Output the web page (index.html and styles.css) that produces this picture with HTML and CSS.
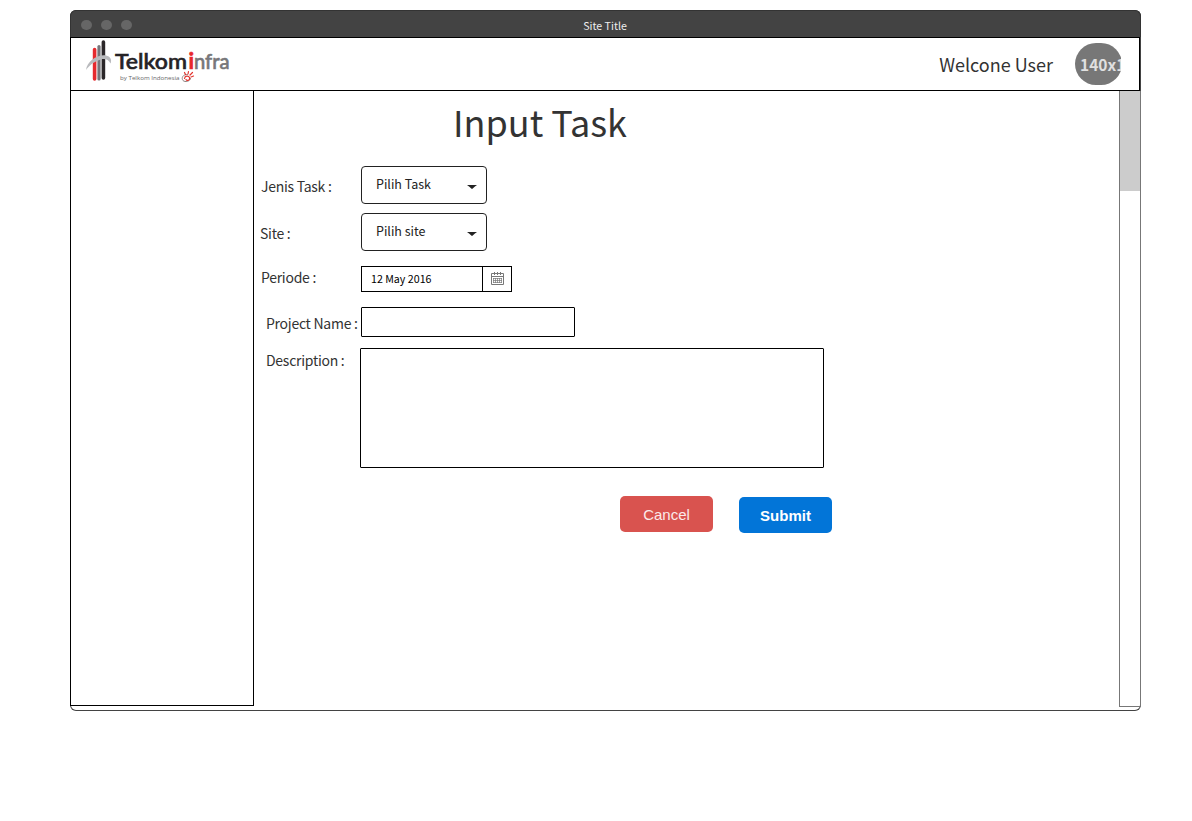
FILE: index.html
```html
<!DOCTYPE html>
<html lang="id">
<head>
<meta charset="utf-8">
<title>Site Title</title>
<link rel="stylesheet" href="styles.css">
</head>
<body>
<div class="window">
  <div class="titlebar">
    <div class="dots"><i class="dot"></i><i class="dot"></i><i class="dot"></i></div>
    <span class="site-title">Site Title</span>
  </div>
  <header class="header">
    <svg class="logo" width="156" height="50" viewBox="80 38 156 50" role="img" aria-label="Telkominfra">
      <g fill="none" stroke-linecap="round">
        <path d="M94.600 49.500V79" stroke="#e62a2e" stroke-width="3.600"/>
        <path d="M99 46.500V79" stroke="#75757a" stroke-width="3.200"/>
        <path d="M103.400 42V78" stroke="#2b2729" stroke-width="3.600"/>
      </g>
      <path d="M86 70C87 61 98 54 106 55.500C110.500 56.200 112 60 110.500 63.500C108 58 103 58 98 60.500C92 63 89 66 86 70Z" fill="#b9babd"/>
      <text class="logo-name" x="115" y="69" textLength="72" lengthAdjust="spacingAndGlyphs" fill="#252225" stroke="#252225">Telkom</text>
      <text class="logo-name logo-i" x="188.500" y="69" fill="#e8262b" stroke="#e8262b">i</text>
      <text class="logo-name" x="194" y="69" textLength="35.500" lengthAdjust="spacingAndGlyphs" fill="#77777a" stroke="#77777a">nfra</text>
      <text class="logo-by" x="120" y="80" textLength="59.500" lengthAdjust="spacingAndGlyphs" fill="#66666a">by Telkom Indonesia</text>
      <g fill="none" stroke-linecap="round">
        <path d="M187.500 74.500C183 74 181 78 183 80.500C185 82.500 190 81.500 190.500 78.500" stroke="#8e8280" stroke-width="1"/>
        <path d="M184.500 78.500C185 75.500 188.500 75.500 189.500 77.500C190.500 80 187 81.500 186 79.500M185.500 74.500L184.500 72.500M188 74L188.500 71.500M190 75L192.500 72.500M191 77L193.500 76" stroke="#e3352f" stroke-width="1.200"/>
      </g>
    </svg>
    <span class="welcome">Welcone User</span>
    <div class="avatar"><svg width="46" height="42" viewBox="0 0 46 42"><rect width="47" height="42" rx="21" fill="#777"/><text class="avatar-text" x="5" y="28">140x1</text></svg></div>
  </header>
  <div class="body">
    <aside class="sidebar"></aside>
    <main class="main">
      <h1 class="heading">Input Task</h1>
      <div class="row row-task">
        <label class="label">Jenis Task :</label>
        <div class="select"><span>Pilih Task</span><svg class="caret" width="10" height="5" viewBox="0 0 10 5"><path d="M0 0H10Q8 1 5.700 3.600Q5 4.200 4.300 3.600Q2 1 0 0Z" fill="#222"/></svg></div>
      </div>
      <div class="row row-site">
        <label class="label">Site :</label>
        <div class="select"><span>Pilih site</span><svg class="caret" width="10" height="5" viewBox="0 0 10 5"><path d="M0 0H10Q8 1 5.700 3.600Q5 4.200 4.300 3.600Q2 1 0 0Z" fill="#222"/></svg></div>
      </div>
      <div class="row row-period">
        <label class="label">Periode :</label>
        <div class="date">
          <span class="date-value">12 May 2016</span>
          <span class="date-button"><svg width="13" height="13" viewBox="0 0 13 13" fill="none" stroke="#777" stroke-width="1"><path d="M.5 1.500H12.500V12.500H.5ZM.5 4.500H12.500"/><path d="M3.500 0V3M6.500 0V3M9.500 0V3"/><path d="M2 6.500H11M2 8.500H11M2 10.500H11M2.500 6V11M4.500 6V11M6.500 6V11M8.500 6V11M10.500 6V11" stroke-width=".7"/></svg></span>
        </div>
      </div>
      <div class="row row-project">
        <label class="label">Project Name :</label>
        <div class="input"></div>
      </div>
      <div class="row row-description">
        <label class="label">Description :</label>
        <div class="textarea"></div>
      </div>
      <div class="actions">
        <button class="button cancel">Cancel</button>
        <button class="button submit">Submit</button>
      </div>
    </main>
    <div class="scrollbar"><div class="thumb"></div></div>
  </div>
</div>
</body>
</html>
```

FILE: styles.css
```css
* { box-sizing: border-box; }
body {
  margin: 0;
  padding: 10px 0 0 70px;
  background: #fff;
  color: #333;
  font-family: "Noto Sans CJK SC", "Noto Sans", sans-serif;
}
.window {
  width: 1071px;
  height: 701px;
  border-radius: 6px;
  box-shadow: inset 0 0 0 1px #434343;
}
.titlebar {
  display: grid;
  grid-template-columns: 1fr auto 1fr;
  align-items: center;
  height: 27px;
  padding-top: 2px;
  background: #434343;
  border: 1px solid #333;
  border-bottom: 0;
  border-radius: 6px 6px 0 0;
}
.dots { display: flex; gap: 10px; padding-left: 10px; }
.dot { width: 10.5px; height: 10px; margin-right: -.5px; border-radius: 50%; background: #666; }
.site-title { padding-top: 1px; margin-left: -1px; color: #eee; font-size: 10.67px; line-height: 16px; }
.header {
  display: flex;
  width: 1070px;
  height: 54px;
  padding-left: 9px;
  border: 1px solid #000;
  background: #fff;
}
.logo { flex: none; }
.logo-name { font: 500 22px Lato, sans-serif; stroke-width: .6px; }
.logo-i { font-weight: 700; }
.logo-by { font: 5.8px "Open Sans", sans-serif; }
.welcome {
  margin-left: auto;
  padding-top: 11px;
  font-size: 18px;
  line-height: 30px;
  white-space: nowrap;
}
.avatar { width: 46px; height: 42px; margin: 5px 18px 0 22px; }
.avatar svg { display: block; }
.avatar-text { font-size: 15.5px; font-weight: 700; fill: #e0e0e0; }
.body { display: flex; height: 616px; }
.sidebar {
  width: 184px;
  height: 615px;
  border: 1px solid #000;
  border-top: 0;
}
.main { flex: 1; }
.scrollbar { width: 22px; border: 1px solid #777; border-top: 0; }
.thumb { height: 100px; background: #ccc; }
.heading {
  margin: 0 0 0 199px;
  padding-top: 2px;
  height: 75px;
  font-size: 36px;
  font-weight: 400;
  line-height: 56px;
}
.row { display: flex; }
.label { width: 107px; padding-left: 7px; font-size: 14px; letter-spacing: -.27px; line-height: 20px; white-space: nowrap; }
.row-task .label { padding-top: 10px; }
.row-site { margin-top: 9px; }
.row-site .label { padding: 10px 0 0 6px; }
.row-period { margin-top: 15px; }
.row-period .label { padding-top: 1px; }
.row-project { margin-top: 15px; }
.row-project .label { padding: 6px 0 0 12px; }
.row-description { margin-top: 11px; }
.row-description .label { width: 106px; padding: 2px 0 0 12px; }
.select {
  display: flex;
  justify-content: space-between;
  width: 126px;
  height: 38px;
  padding: 7px 9px 0 14px;
  border: 1px solid #222;
  border-radius: 4px;
  color: #222;
  font-size: 12.5px;
  line-height: 20px;
}
.caret { margin-top: 11px; }
.date {
  display: flex;
  width: 151px;
  height: 26px;
  border: 1px solid #000;
  color: #000;
  font-size: 10.67px;
  line-height: 24px;
}
.date-value { width: 120px; padding-left: 9px; }
.date-button { flex: 1; padding: 5px 0 0 8px; border-left: 1px solid #000; }
.date-button svg { display: block; }
.input { width: 214px; height: 30px; border: 1px solid #000; border-radius: 1px; }
.textarea { width: 464px; height: 120px; border: 1px solid #000; border-radius: 1px; }
.actions { display: flex; gap: 26px; padding: 28px 0 0 366px; }
.button {
  width: 93px;
  height: 36px;
  padding: 0;
  border: 0;
  border-radius: 5px;
  color: #fff;
  font: 15px "Liberation Sans", Arial, sans-serif;
}
.cancel { background: #d9534f; color: #fbeaea; }
.submit { margin-top: 1px; background: #0275d8; font-weight: 700; }
```
